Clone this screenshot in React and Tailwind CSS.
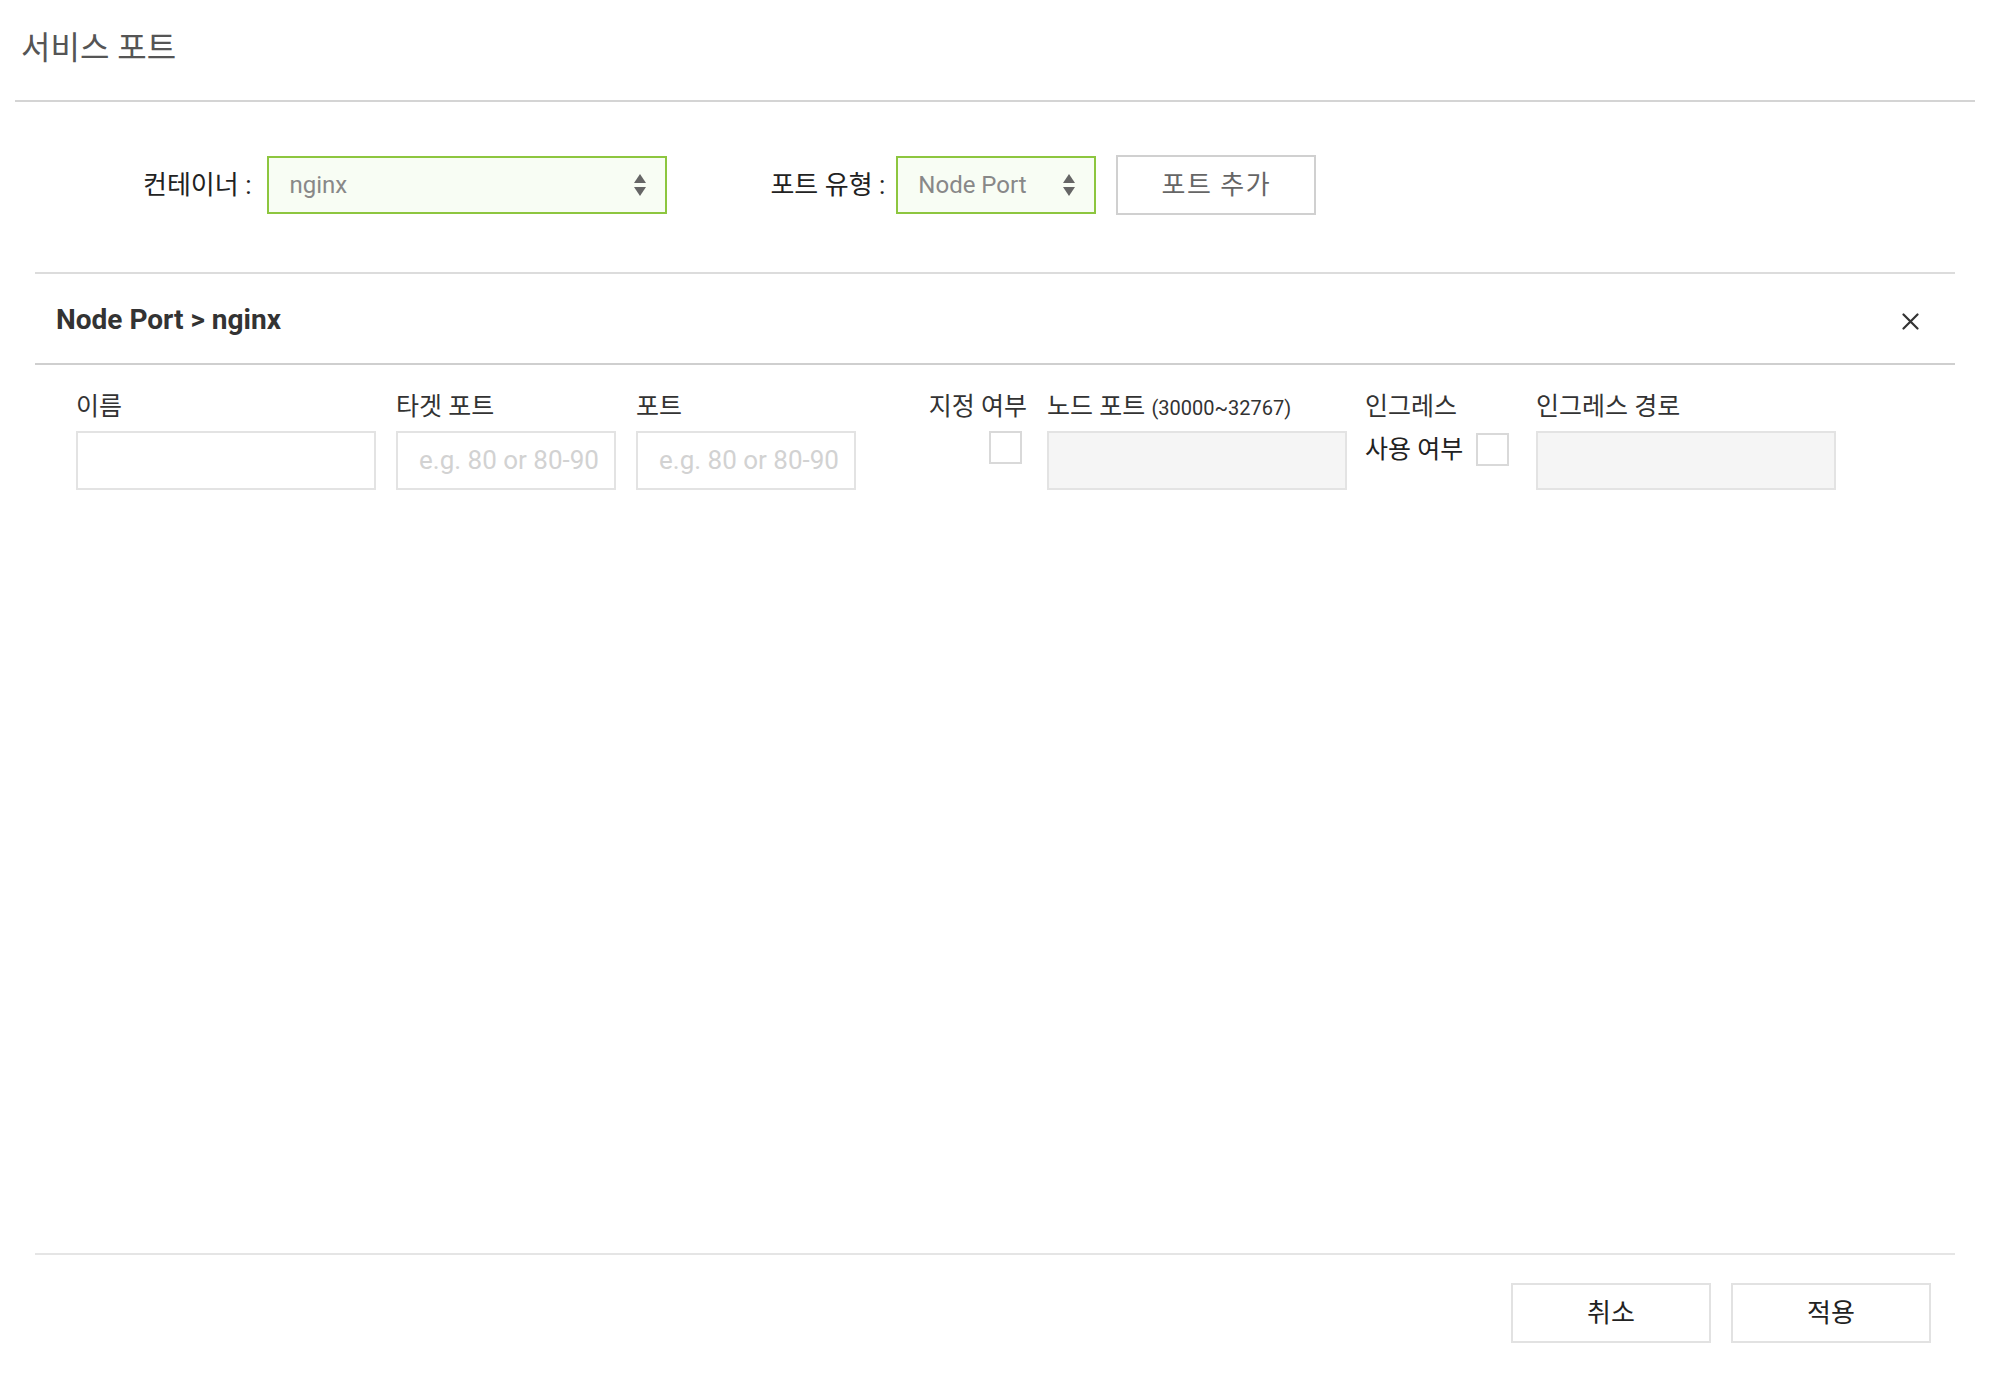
const font = { fontFamily: "Roboto, 'Noto Sans CJK KR', sans-serif" };

const SelectArrows = () => (
  <svg width="12" height="23" viewBox="0 0 12 23" className="shrink-0">
    <polygon points="6,0 12,9 0,9" fill="#666" />
    <polygon points="0,13 12,13 6,22" fill="#666" />
  </svg>
);

const FakeSelect = ({ value, width }) => (
  <div
    className={`h-[58px] ${width} flex items-center justify-between pl-[20px] pr-[19px] border-2 border-[#8dc63f] bg-[#f8fdf4]`}
  >
    <span className="text-[24px] text-[#888]">{value}</span>
    <SelectArrows />
  </div>
);

const Checkbox = () => (
  <div className="w-[33px] h-[33px] border-2 border-[#d9d9d9] bg-white shrink-0" />
);

const TextInput = ({ width, placeholder, disabled }) => (
  <div
    className={`h-[59px] ${width} border-2 border-[#e3e3e3] flex items-center px-[21px] overflow-hidden ${
      disabled ? "bg-[#f5f5f5]" : "bg-white"
    }`}
  >
    {placeholder && (
      <span className="text-[26px] text-[#d2d2d2] whitespace-nowrap">
        {placeholder}
      </span>
    )}
  </div>
);

const FieldLabel = ({ children }) => (
  <div className="h-[30px] leading-[30px] text-[25px] text-[#333] whitespace-nowrap">
    {children}
  </div>
);

export default function App() {
  return (
    <div className="w-full h-[1374px] bg-white flex flex-col" style={font}>
      {/* header */}
      <div className="mx-[15px] h-[102px] border-b-2 border-[#d4d4d4] flex items-center pl-[6px] pb-[4px]">
        <h1 className="text-[32px] text-[#555] font-normal">서비스 포트</h1>
      </div>

      {/* container / port type row */}
      <div className="flex items-center pl-[143px] mt-[53px] mb-[57px] h-[60px]">
        <span className="text-[26px] text-[#222] mr-[16px]">컨테이너 :</span>
        <FakeSelect value="nginx" width="w-[400px]" />
        <span className="text-[26px] text-[#222] ml-[103px] mr-[11px]">포트 유형 :</span>
        <FakeSelect value="Node Port" width="w-[200px]" />
        <button className="ml-[20px] w-[200px] h-[60px] border-2 border-[#d0d0d0] bg-white text-[26px] text-[#666] tracking-[1.5px]">
          포트 추가
        </button>
      </div>

      {/* port section */}
      <div className="mx-[35px] flex-1 border-t-2 border-[#dcdcdc]">
        <div className="h-[91px] border-b-2 border-[#cfcfcf] flex items-center justify-between pl-[21px] pr-[36px] pt-[2px]">
          <span className="text-[28px] font-bold text-[#333]">Node Port &gt; nginx</span>
          <svg width="17" height="17" viewBox="0 0 17 17" className="mt-[4px]">
            <path d="M1.5 1.5 L15.5 15.5 M15.5 1.5 L1.5 15.5" stroke="#333" strokeWidth="2.2" strokeLinecap="round" />
          </svg>
        </div>

        <div className="flex items-start gap-[20px] pl-[41px] pt-[27px]">
          <div className="flex flex-col gap-[9px]">
            <FieldLabel>이름</FieldLabel>
            <TextInput width="w-[300px]" />
          </div>
          <div className="flex flex-col gap-[9px]">
            <FieldLabel>타겟 포트</FieldLabel>
            <TextInput width="w-[220px]" placeholder="e.g. 80 or 80-90" />
          </div>
          <div className="flex flex-col gap-[9px]">
            <FieldLabel>포트</FieldLabel>
            <TextInput width="w-[220px]" placeholder="e.g. 80 or 80-90" />
          </div>
          <div className="flex flex-col items-end gap-[9px] w-[151px]">
            <FieldLabel>지정 여부</FieldLabel>
            <div className="mr-[5px]">
              <Checkbox />
            </div>
          </div>
          <div className="flex flex-col gap-[9px]">
            <FieldLabel>
              노드 포트 <span className="text-[20px]">(30000~32767)</span>
            </FieldLabel>
            <TextInput width="w-[300px]" disabled />
          </div>
          <div className="flex flex-col gap-[9px] w-[151px] -ml-[2px]">
            <FieldLabel>인그레스</FieldLabel>
            <div className="flex items-center gap-[13px]">
              <span className="text-[25px] text-[#222] whitespace-nowrap">사용 여부</span>
              <Checkbox />
            </div>
          </div>
          <div className="flex flex-col gap-[9px]">
            <FieldLabel>인그레스 경로</FieldLabel>
            <TextInput width="w-[300px]" disabled />
          </div>
        </div>
      </div>

      {/* footer */}
      <div className="mx-[35px] border-t-2 border-[#e5e5e5] pt-[28px] pb-[31px] pr-[24px] flex justify-end gap-[20px]">
        <button className="w-[200px] h-[60px] border-2 border-[#e2e2e2] bg-white text-[26px] text-[#222]">
          취소
        </button>
        <button className="w-[200px] h-[60px] border-2 border-[#e2e2e2] bg-white text-[26px] text-[#222]">
          적용
        </button>
      </div>
    </div>
  );
}
